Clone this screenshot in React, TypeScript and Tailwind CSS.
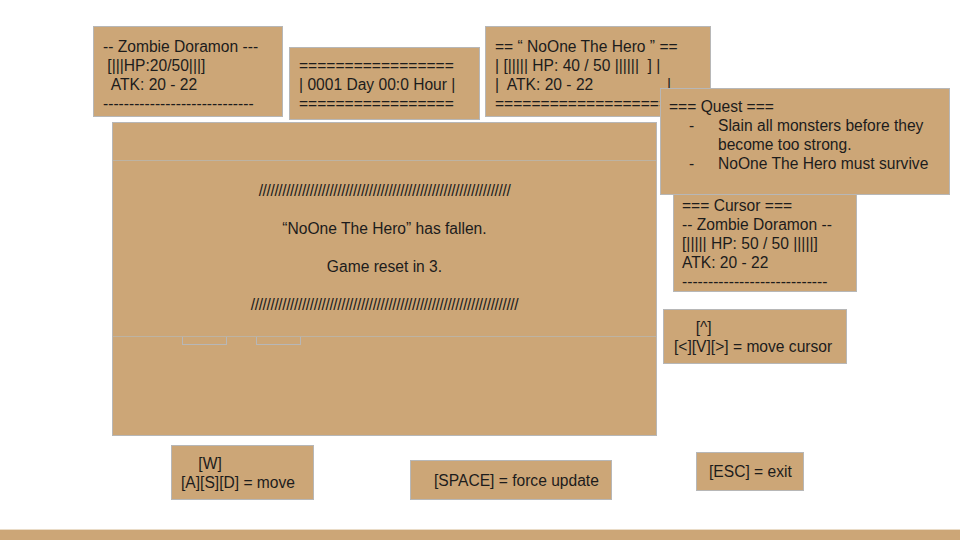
import type { ReactNode } from "react";

const Box = ({
  className,
  wrap = false,
  children,
}: {
  className: string;
  wrap?: boolean;
  children?: ReactNode;
}) => (
  <div
    className={`absolute bg-[#cca677] border border-[#b7b7b7] text-[15.6px] leading-[19px] text-[#1c1c1c] ${
      wrap ? "whitespace-normal" : "whitespace-pre"
    } ${className}`}
  >
    {children}
  </div>
);

const slashes = (n: number) => "/".repeat(n);

export default function App() {
  return (
    <div
      className="relative w-[960px] h-[540px] overflow-hidden bg-white"
      style={{ fontFamily: '"Liberation Sans", Arial, sans-serif' }}
    >
      {/* enemy */}
      <Box className="left-[93px] top-[26px] w-[190px] h-[91px] pl-[9px] pt-[10px]">
        <div>-- Zombie Doramon ---</div>
        <div> [|||HP:20/50|||]</div>
        <div>  ATK: 20 - 22</div>
        <div>-----------------------------</div>
      </Box>

      {/* clock */}
      <Box className="left-[289px] top-[47px] w-[191px] h-[73px] pl-[9px] pt-[8px]">
        <div>=================</div>
        <div>| 0001 Day 00:0 Hour |</div>
        <div>=================</div>
      </Box>

      {/* hero */}
      <Box className="left-[485px] top-[26px] w-[226px] h-[91px] pl-[9px] pt-[10px] overflow-hidden">
        <div>== “ NoOne The Hero ” ==</div>
        <div>| [||||| HP: 40 / 50 ||||||  ] |</div>
        <div>|  ATK: 20 - 22                 |</div>
        <div>========================</div>
      </Box>

      {/* main board */}
      <div className="absolute left-[112px] top-[122px] w-[545px] h-[314px] bg-[#cca677] border border-[#b7b7b7] flex flex-col text-[15.6px] leading-[19px] text-[#1c1c1c]">
        <div className="h-[38px] border-b border-[#bdb3a3]" />
        <div className="h-[175px] flex flex-col items-center pt-[20px] gap-[19px]">
          <div className="tracking-[-0.4px]">{slashes(64)}</div>
          <div>“NoOne The Hero” has fallen.</div>
          <div>Game reset in 3.</div>
          <div className="tracking-[-0.4px]">{slashes(68)}</div>
        </div>
        <div className="flex-1 border-t border-[#bdb3a3] relative">
          <div className="absolute left-[69px] top-0 w-[45px] h-[8px] border border-t-0 border-[#b7b7b7]" />
          <div className="absolute left-[143px] top-0 w-[45px] h-[8px] border border-t-0 border-[#b7b7b7]" />
        </div>
      </div>

      {/* cursor info */}
      <Box className="left-[673px] top-[192px] w-[184px] h-[100px] pl-[8px] pt-[3px]">
        <div>=== Cursor ===</div>
        <div>-- Zombie Doramon --</div>
        <div>[||||| HP: 50 / 50 |||||]</div>
        <div>ATK: 20 - 22</div>
        <div>----------------------------</div>
      </Box>

      {/* quest */}
      <Box wrap className="left-[660px] top-[88px] w-[290px] h-[107px] pl-[8px] pr-[12px] pt-[8px]">
        <div>=== Quest ===</div>
        <div className="flex">
          <span className="w-[49px] pl-[20px] shrink-0">-</span>
          <span>Slain all monsters before they become too strong.</span>
        </div>
        <div className="flex">
          <span className="w-[49px] pl-[20px] shrink-0">-</span>
          <span>NoOne The Hero must survive</span>
        </div>
      </Box>

      {/* controls */}
      <Box className="left-[663px] top-[309px] w-[184px] h-[55px] pl-[10px] pt-[8px]">
        <div>     [^]</div>
        <div>[&lt;][V][&gt;] = move cursor</div>
      </Box>

      <Box className="left-[171px] top-[445px] w-[143px] h-[55px] pl-[9px] pt-[8px]">
        <div>    [W]</div>
        <div>[A][S][D] = move</div>
      </Box>

      <Box className="left-[410px] top-[460px] w-[202px] h-[40px] pl-[23px] pt-[10px]">
        <div>[SPACE] = force update</div>
      </Box>

      <Box className="left-[696px] top-[452px] w-[108px] h-[39px] pl-[12px] pt-[9px]">
        <div>[ESC] = exit</div>
      </Box>

      <div className="absolute left-0 top-[529px] w-full h-[11px] bg-[#cca677] border-t border-[#eadcc8]" />
    </div>
  );
}
